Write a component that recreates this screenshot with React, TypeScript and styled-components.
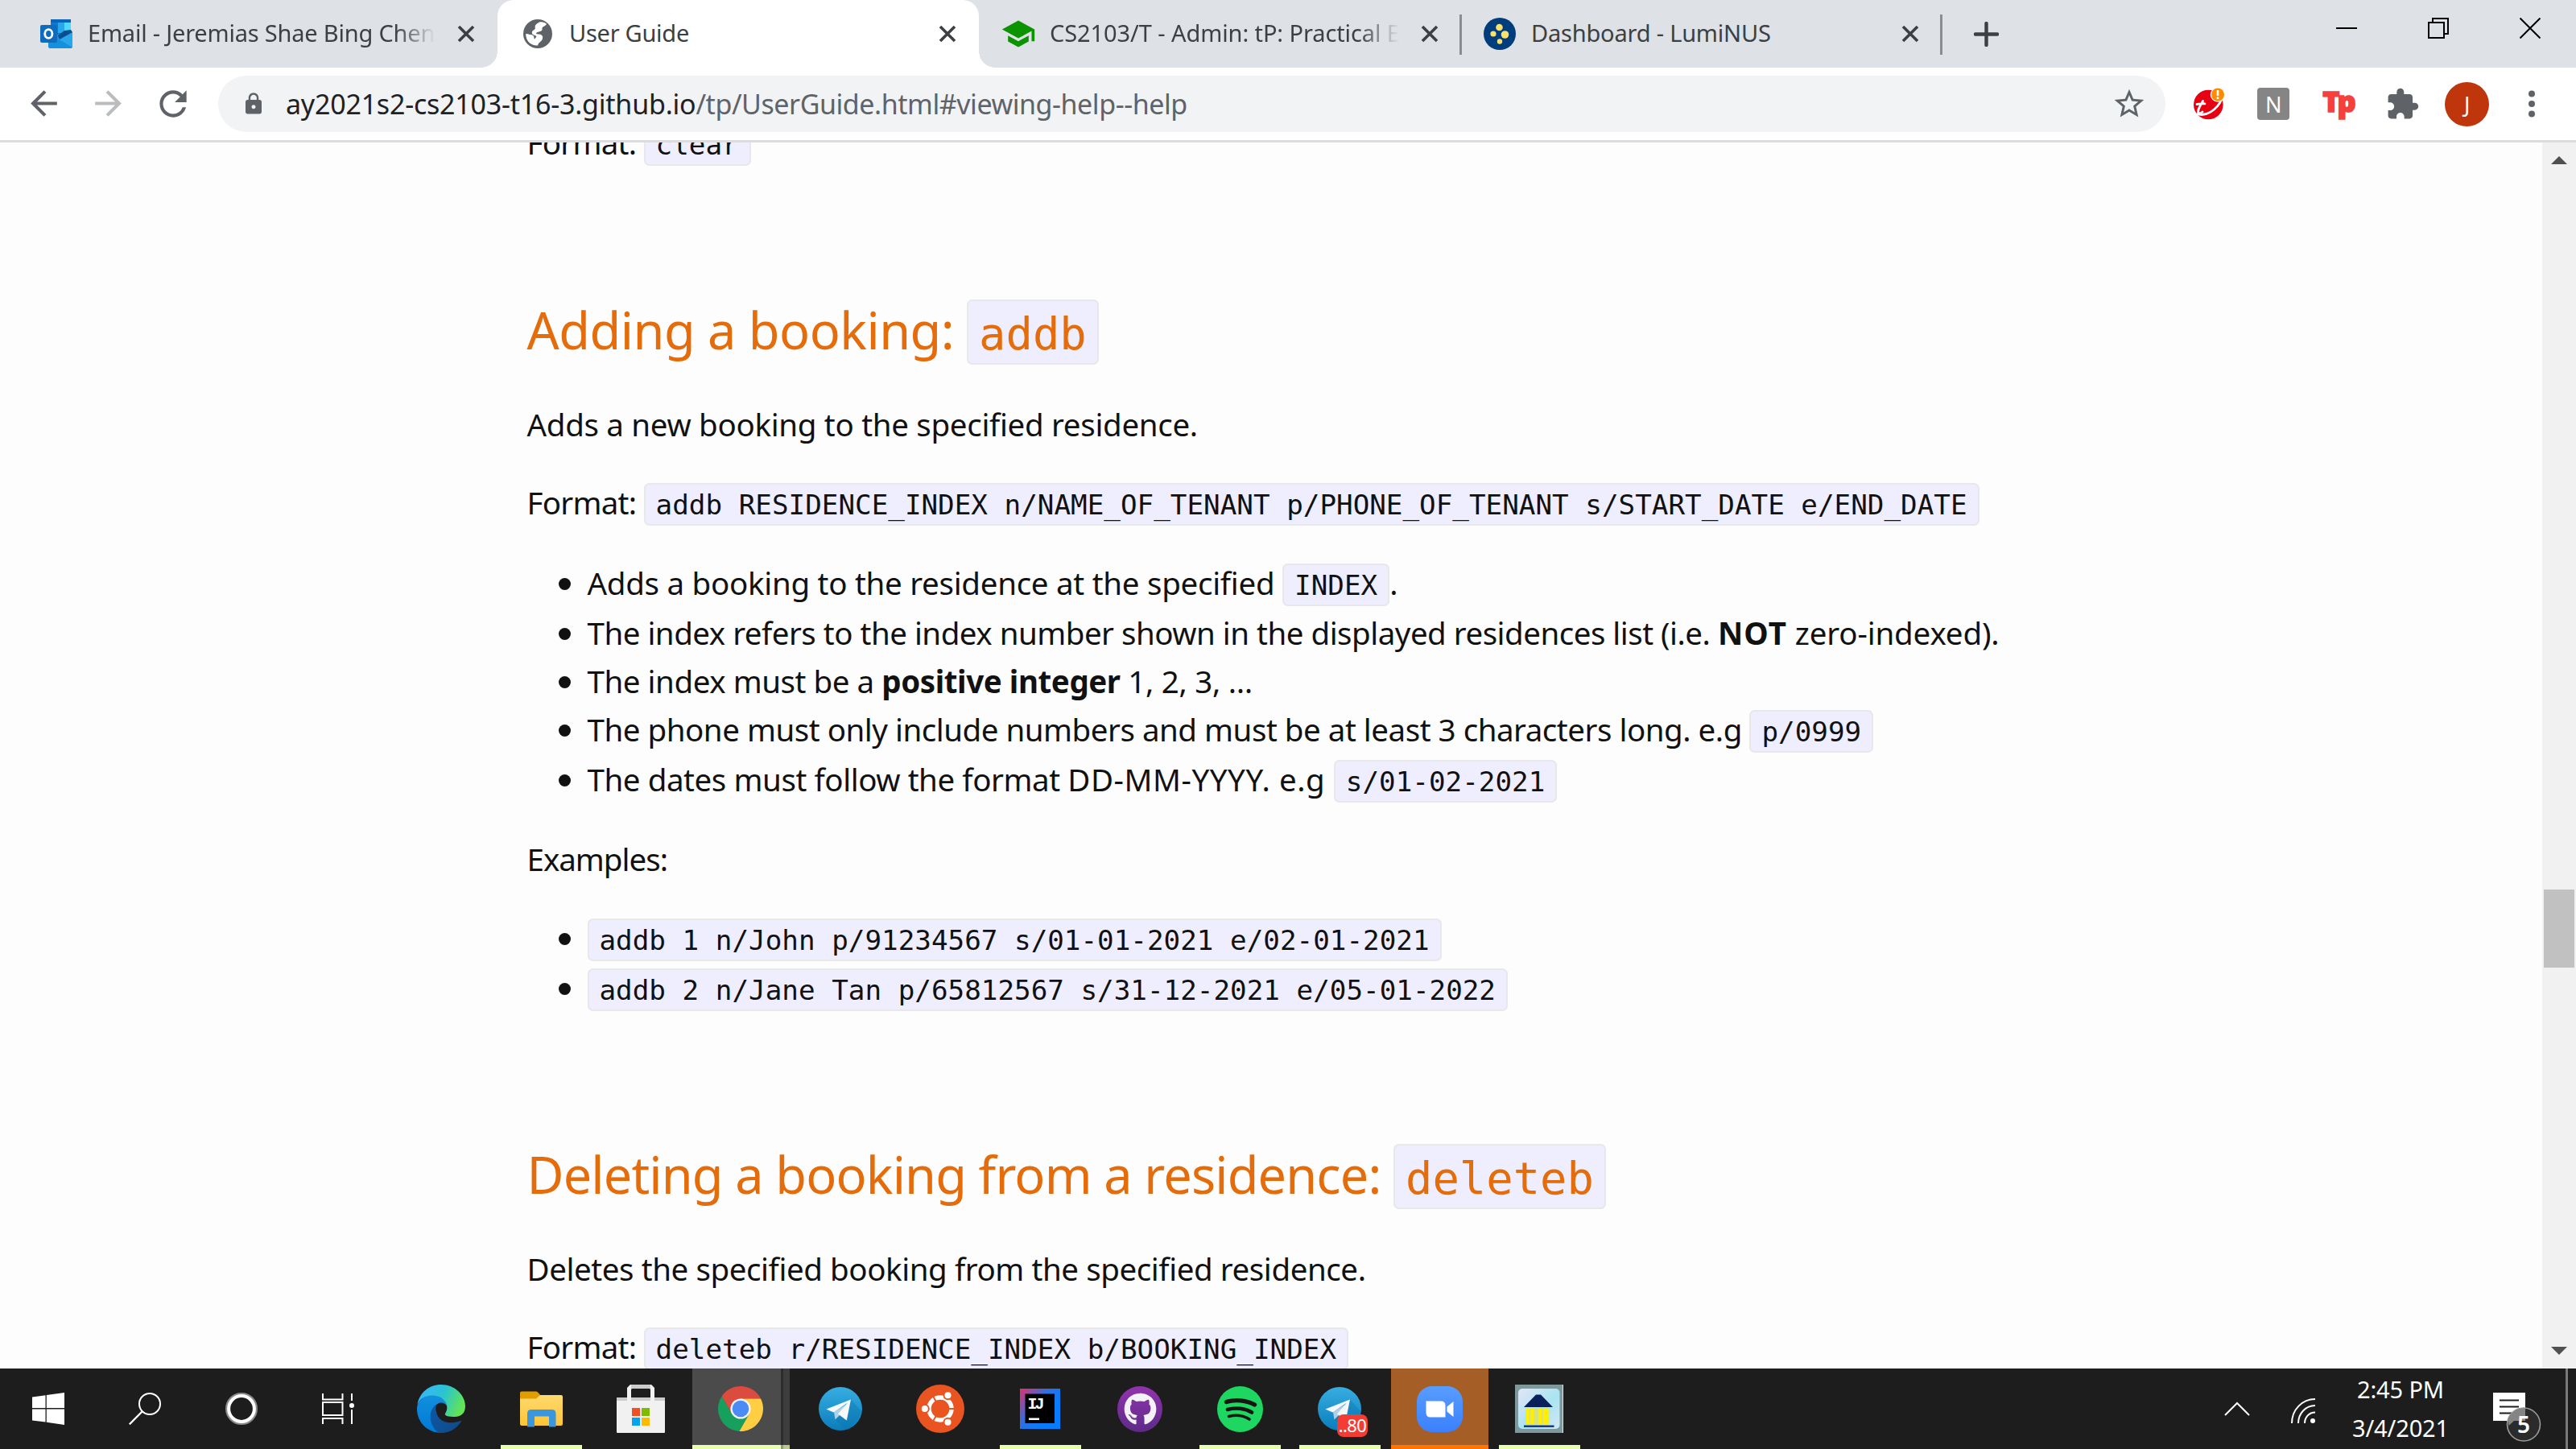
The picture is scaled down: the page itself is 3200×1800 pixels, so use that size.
import React from "react";
import styled, { createGlobalStyle, css } from "styled-components";
import { MdArrowBack, MdArrowForward, MdExtension, MdLock, MdRefresh, MdSchool, MdStarBorder } from "react-icons/md";
import { FaGithub } from "react-icons/fa";

const GlobalStyle = createGlobalStyle`
  * { box-sizing: border-box; }
  body { margin: 0; overflow: hidden; }
  svg { display: block; flex: none; }
`;

const Screen = styled.div`
  display: flex;
  flex-direction: column;
  width: 3200px;
  height: 1800px;
  overflow: hidden;
  background: #fff;
  font-family: "Noto Sans", "Open Sans", sans-serif;
`;

/* ---------- tab strip ---------- */

const TabStrip = styled.div`
  display: flex;
  flex: none;
  height: 84px;
  background: #dee1e6;
`;

const Tab = styled.div<{ w: number; inset: number; active?: boolean; divided?: boolean }>`
  position: relative;
  display: flex;
  align-items: center;
  flex: none;
  width: ${p => p.w}px;
  padding: 0 28px 0 ${p => p.inset}px;
  ${p =>
    p.active &&
    css`
      background: #fff;
      border-radius: 20px 20px 0 0;
      &::before,
      &::after {
        content: "";
        position: absolute;
        bottom: 0;
        width: 20px;
        height: 20px;
      }
      &::before {
        left: -20px;
        background: radial-gradient(circle at 0 0, transparent 19.5px, #fff 20px);
      }
      &::after {
        right: -20px;
        background: radial-gradient(circle at 100% 0, transparent 19.5px, #fff 20px);
      }
    `}
  ${p =>
    p.divided &&
    css`
      &::after {
        content: "";
        position: absolute;
        right: -1px;
        top: 18px;
        width: 3px;
        height: 50px;
        background: #898c91;
      }
    `}
`;

const Favicon = styled.div`
  display: flex;
  align-items: center;
  justify-content: center;
  flex: none;
  width: 40px;
  height: 40px;
`;

const TabTitle = styled.div<{ track?: number; fade?: boolean }>`
  flex: 1;
  min-width: 0;
  margin: 0 27px 0 19px;
  padding-bottom: 3px;
  overflow: hidden;
  white-space: pre;
  font-size: 29px;
  line-height: 40px;
  color: #3c4043;
  letter-spacing: ${p => p.track ?? 0}px;
  ${p => p.fade && css`mask-image: linear-gradient(90deg, #000 calc(100% - 50px), transparent);`}
`;

const NewTab = styled.div`
  display: flex;
  align-items: center;
  padding-left: 40px;
`;

const WindowButtons = styled.div`
  display: flex;
  gap: 88px;
  margin-left: auto;
  padding: 22px 44px 0 0;
`;

const CloseX = () => (
  <svg width="22" height="22" viewBox="0 0 22 22">
    <path d="M2 2L20 20M20 2L2 20" stroke="#3c4043" strokeWidth="3.6" />
  </svg>
);

/* ---------- toolbar ---------- */

const Toolbar = styled.div`
  display: flex;
  align-items: center;
  flex: none;
  height: 93px;
  padding: 0 15px 0 30px;
  border-bottom: 3px solid #dadce0;
  background: #fff;
  color: #5f6368;
`;

const NavButtons = styled.div`
  display: flex;
  gap: 31px;
  width: 241px;
`;

const Omnibox = styled.div`
  display: flex;
  align-items: center;
  width: 2419px;
  height: 70px;
  padding: 0 23px 0 29px;
  border-radius: 35px;
  background: #f1f3f4;
`;

const Url = styled.div`
  flex: 1;
  padding-left: 25px;
  white-space: nowrap;
  font-size: 34px;
  line-height: 70px;
  letter-spacing: -0.45px;
`;

const Host = styled.span`
  color: #202124;
  letter-spacing: -0.22px;
`;

const Extensions = styled.div`
  display: grid;
  grid-template-columns: repeat(6, 80.2px);
  align-items: center;
  justify-items: center;
  padding-left: 14px;
`;

const Avatar = styled.div`
  display: flex;
  align-items: center;
  justify-content: center;
  width: 55px;
  height: 55px;
  border-radius: 50%;
  background: #bf360c;
  color: #fff;
  font-size: 27px;
`;

const NoteBadge = styled.div`
  display: flex;
  align-items: center;
  justify-content: center;
  width: 40px;
  height: 40px;
  border-radius: 4px;
  background: #858585;
  color: #fff;
  font-size: 27px;
`;

const TpLogo = styled.div`
  padding-bottom: 7px;
  color: #f6403c;
  font-family: "Open Sans", sans-serif;
  font-size: 36px;
  font-weight: 800;
  line-height: 50px;
  letter-spacing: -3px;
  -webkit-text-stroke: 1.6px #f6403c;
`;

/* ---------- document ---------- */

const Viewport = styled.div`
  display: flex;
  flex: 1;
  min-height: 0;
  overflow: hidden;
  background: #fdfdfd;
`;

const Article = styled.div`
  flex: 1;
  min-width: 0;
  margin-top: -30px;
  padding-left: 654.5px;
  color: #111;
  font-size: 38.5px;
  line-height: 60px;
  white-space: pre;
`;

const Code = styled.code`
  padding: 5px 13px 4px;
  border: 2px solid #e8e8e8;
  border-radius: 7px;
  background: #eef;
  font-family: "DejaVu Sans Mono", monospace;
  font-size: 34.25px;
  line-height: 0;
  letter-spacing: 0;
`;

const Heading = styled.h3`
  height: 90px;
  margin: 0 0 42px;
  color: #e46c0a;
  font-size: 63px;
  font-weight: 400;
  line-height: 90px;

  ${Code} {
    padding: 8px 13px 4px;
    font-size: 55.5px;
  }
`;

const Para = styled.p<{ after?: number }>`
  height: 60px;
  margin: 0 0 ${p => p.after ?? 37}px;
`;

const Run = styled.span<{ track: number; bold?: boolean }>`
  letter-spacing: ${p => p.track}px;
  font-weight: ${p => (p.bold ? 700 : 400)};
`;

const List = styled.ul<{ after: number }>`
  margin: 0 0 ${p => p.after}px;
  padding: 0 0 0 39px;
  list-style: none;
`;

const Item = styled.li<{ tall?: boolean }>`
  display: grid;
  grid-template-columns: 15px 1fr;
  column-gap: 21px;
  height: ${p => (p.tall ? 62 : 60)}px;

  &::before {
    content: "";
    width: 15px;
    height: 15px;
    margin-top: 24px;
    border-radius: 50%;
    background: #111;
  }
`;

const Scrollbar = styled.div`
  display: flex;
  flex-direction: column;
  align-items: center;
  flex: none;
  width: 42px;
  background: #f1f1f1;
`;

const ArrowCell = styled.div`
  display: flex;
  align-items: center;
  justify-content: center;
  height: 44px;
`;

const Thumb = styled.div`
  width: 38px;
  height: 97px;
  margin: 884px 0 auto;
  background: #c1c1c1;
`;

/* ---------- taskbar ---------- */

const Taskbar = styled.div`
  display: flex;
  flex: none;
  height: 100px;
  background: #1d1d1d;
`;

const SystemSlot = styled.div`
  display: flex;
  align-items: center;
  justify-content: center;
  width: 120px;
`;

const Apps = styled.div`
  display: flex;
  margin-left: 6px;
`;

const AppSlot = styled.div<{ running?: boolean; tone?: "focus" | "alert" }>`
  position: relative;
  display: flex;
  align-items: center;
  justify-content: center;
  width: 124px;
  ${p =>
    p.running &&
    css`
      background: linear-gradient(#e6ffae, #e6ffae) 12px 95px / 101px 5px no-repeat;
    `}
  ${p =>
    p.tone === "focus" &&
    css`
      padding-right: 1px;
      background: linear-gradient(#e6ffae, #e6ffae) 2px 95px / 110px 5px no-repeat,
        linear-gradient(#8f9e72, #8f9e72) 112px 95px / 3px 5px no-repeat,
        linear-gradient(#b8c98e, #b8c98e) 115px 95px / 8px 5px no-repeat,
        linear-gradient(90deg, transparent 2px, #4b4b4b 2px 112px, #2d2d2d 112px 115px, #3d3d3d 115px 123px, transparent 123px);
    `}
  ${p =>
    p.tone === "alert" &&
    css`
      background: linear-gradient(#ff7500, #ff7500) 2px 95px / 121px 5px no-repeat,
        linear-gradient(90deg, transparent 2px, #a55e26 2px 123px, transparent 123px);
    `}
`;

const UnreadBadge = styled.div`
  position: absolute;
  left: 59px;
  top: 57px;
  width: 38px;
  height: 28px;
  border-radius: 8px;
  background: #f23c34;
  color: #fff;
  font-size: 22px;
  line-height: 27px;
  letter-spacing: -0.6px;
  text-align: center;
`;

const Tray = styled.div`
  display: flex;
  align-items: center;
  margin-left: auto;
  padding-right: 10px;
`;

const TrayIcon = styled.div<{ after: number; drop?: number }>`
  margin-right: ${p => p.after}px;
  padding-top: ${p => p.drop ?? 0}px;
`;

const Clock = styled.div`
  width: 124px;
  margin-right: 53px;
  padding-bottom: 1px;
  color: #fff;
  font-size: 29px;
  line-height: 47.5px;
  letter-spacing: -0.15px;
  text-align: center;
`;

const ShowDesktop = styled.div`
  width: 3px;
  height: 100px;
  background: #7a7a7a;
`;

/* ---------- drawings ---------- */

const OutlookIcon = () => (
  <svg width="40" height="36" viewBox="0 0 40 36">
    <rect x="13" width="25" height="30" fill="#0a64b8" />
    <rect x="13" y="4" width="9" height="13" fill="#0f78d4" />
    <rect x="22" y="4" width="8" height="13" fill="#28a8ea" />
    <rect x="30" y="4" width="8" height="10" fill="#50d9ff" />
    <rect x="22" y="17" width="8" height="7" fill="#0f78d4" />
    <path d="M10 20L40 16V34a2 2 0 0 1-2 2H12a2 2 0 0 1-2-2Z" fill="#1490df" />
    <path d="M22 24L40 16V35Z" fill="#28a8ea" />
    <path d="M40 16L24 25L22 20L30 14L38 13Z" fill="#0a4e92" />
    <rect y="7" width="21" height="22" rx="2" fill="#0f6cbd" />
    <ellipse cx="10.300" cy="18" rx="4.600" ry="5.400" fill="none" stroke="#fff" strokeWidth="2.800" />
  </svg>
);

const GlobeIcon = () => (
  <svg width="36" height="36" viewBox="0 0 36 36">
    <circle cx="18" cy="18" r="18" fill="#5f6368" />
    <path d="M20 3.500C24 3 27 4 29 6C27 9 23 9 23.500 12C24 15 20 15 17.500 16C15 17 16 18.500 19 18.500C22 18.500 25 20 24 24C23 28 19 28 18 32.500C9 33 3 26 3.500 18L11 19.500C14 20.500 13 23 14 25C15 23 17 22 16 20.500C13 20 9.500 18 11 15C12.500 13 15 13 14.500 10.500C14 7 17 4.500 20 3.500Z" fill="#fff" />
    <path d="M3.500 18C4 10 11 3.500 20 3.500C15 6 14 8 14.500 10.500C15 13 12 13 11 15C10 17 11 18.500 12 19.500Z" fill="#5f6368" />
    <path d="M3.500 18L11 19.500C14 21 12 24 14.500 26L14 32C7 30 3 25 3.500 18Z" fill="#fff" />
  </svg>
);

const LuminusIcon = () => (
  <svg width="40" height="40" viewBox="0 0 40 40">
    <circle cx="20" cy="20" r="20" fill="#003d7c" />
    <circle cx="19.500" cy="12" r="4.300" fill="#fbe06a" />
    <circle cx="12" cy="20" r="3.600" fill="#fbe06a" />
    <circle cx="26.500" cy="21" r="4.800" fill="#fbe06a" />
    <circle cx="20" cy="29.500" r="3.200" fill="#fbe06a" />
  </svg>
);

const TrendIcon = () => (
  <svg width="38" height="40" viewBox="0 0 38 40">
    <circle cx="18.300" cy="21" r="18.300" fill="#e60012" />
    <path d="M4 20.500C8 20 10 19.500 14 19.800M11.500 16.500C8 23 3.500 29 6.500 31.500C8.500 32.500 10 31 11 30" fill="none" stroke="#fff" strokeWidth="2.800" strokeLinecap="round" />
    <path d="M3.500 32C14 37 29 28 35 14" fill="none" stroke="#fff" strokeWidth="2.800" />
    <circle cx="30" cy="8.500" r="9.200" fill="#fff" />
    <circle cx="30" cy="8.500" r="8" fill="#ff8c00" />
    <rect x="28.700" y="3" width="2.600" height="7" fill="#fff" />
    <rect x="28.700" y="11.500" width="2.600" height="2.600" fill="#fff" />
  </svg>
);

const WindowsIcon = () => (
  <svg width="40" height="40" viewBox="0 0 40 40" fill="#fff">
    <path d="M0 5.500L16.500 3.200V19H0ZM17.800 3L40 0V19H17.800ZM0 20.500H16.500V36.500L0 34.500ZM17.800 20.500H40V40L17.800 36.800Z" />
  </svg>
);

const SearchIcon = () => (
  <svg width="40" height="40" viewBox="0 0 40 40" fill="none" stroke="#fff" strokeWidth="2">
    <circle cx="26" cy="14" r="13" />
    <path d="M16.500 23.500L.8 39.300" strokeWidth="2.400" />
  </svg>
);

const CortanaIcon = () => (
  <svg width="40" height="40" viewBox="0 0 40 40" fill="none">
    <circle cx="20" cy="20" r="18.600" stroke="#8b8b8b" strokeWidth="2.800" />
    <circle cx="20" cy="20" r="15.900" stroke="#fff" strokeWidth="4" />
  </svg>
);

const TaskViewIcon = () => (
  <svg width="40" height="40" viewBox="0 0 40 40" fill="none" stroke="#fff" strokeWidth="2">
    <path d="M1 1V8.500H25.500V1M1 39V32H25.500V39M1 12H25.500V28H1ZM37 1V10M37 21V39" />
    <circle cx="37" cy="16" r="3" fill="#fff" stroke="none" />
  </svg>
);

const EdgeIcon = () => (
  <svg width="60" height="60" viewBox="0 0 60 60">
    <defs>
      <linearGradient id="edgeTop" x1="0" y1=".3" x2="1" y2=".6">
        <stop offset=".05" stopColor="#35b8f8" />
        <stop offset=".5" stopColor="#2bc3d2" />
        <stop offset=".95" stopColor="#61e457" />
      </linearGradient>
      <linearGradient id="edgeBody" x1="0" y1="0" x2="0" y2="1">
        <stop offset="0" stopColor="#1390dc" />
        <stop offset="1" stopColor="#0078d7" />
      </linearGradient>
      <linearGradient id="edgeDeep" x1="0" y1="0" x2="1" y2=".6">
        <stop offset="0" stopColor="#0c59a4" />
        <stop offset="1" stopColor="#114a8b" />
      </linearGradient>
    </defs>
    <path d="M0 28C2 18 12 12 20 13C31 14 37 20 37.500 27C35 22.500 29 21 25 24.500C14 32 15 52 33 60C12 61-1 45 0 28Z" fill="url(#edgeBody)" />
    <path d="M25 24C14 30 13 50 27 60C40 61 51 54 55.500 44.500C42 50 27 48 24 34C23 29 23 27 25 24Z" fill="url(#edgeDeep)" />
    <path d="M.5 25C3 10 15 0 30 0C47 0 60 13 60 27C60 35 55 40 47 40C40 40 33.500 39 35 36C40 30 38 15 20 13.500C11 13 4 17 .5 25Z" fill="url(#edgeTop)" />
  </svg>
);

const ExplorerIcon = () => (
  <svg width="53" height="45" viewBox="0 0 53 45">
    <defs>
      <linearGradient id="folder" x1="0" y1="0" x2="0" y2="1">
        <stop offset="0" stopColor="#ffd96f" />
        <stop offset="1" stopColor="#fcc535" />
      </linearGradient>
    </defs>
    <path d="M0 2Q0 .5 2 .5H20Q22 .5 25 5V10H0Z" fill="#e19d00" />
    <path d="M0 9.500H20L25 5H51Q53 5 53 7V41Q53 43 51 43H2Q0 43 0 41Z" fill="url(#folder)" />
    <path d="M9 44.500V28Q9 23 14 23H39.500Q44.500 23 44.500 28V44.500H36V31.500H18V44.500Z" fill="#3a96dd" />
  </svg>
);

const StoreIcon = () => (
  <svg width="60" height="60" viewBox="0 0 60 60">
    <rect y="16" width="60" height="44" rx="1" fill="#f1f1f1" />
    <rect y="16" width="60" height="4" fill="#ccc" />
    <path d="M15.500 20V5L18.500 2H41.500L44.500 5V20" fill="none" stroke="#f1f1f1" strokeWidth="5" />
    <rect x="18" y="0" width="24" height="5" fill="#ccc" />
    <path d="M19 29h10v10H19Z" fill="#f25022" />
    <path d="M31 29h10v10H31Z" fill="#7fba00" />
    <path d="M19 41h10v10H19Z" fill="#00a4ef" />
    <path d="M31 41h10v10H31Z" fill="#ffb900" />
  </svg>
);

const ChromeIcon = () => (
  <svg width="56" height="56" viewBox="0 0 56 56">
    <path d="M53 15.400A28 28 0 0 0 4.600 12.650L17.100 34.300L28 28V15.400Z" fill="#db4c3f" />
    <path d="M4.600 12.650A28 28 0 0 0 26.400 55.950L38.900 34.300L28 28L17.100 34.300Z" fill="#17a05d" />
    <path d="M26.400 55.950A28 28 0 0 0 53 15.400H28V28L38.900 34.300Z" fill="#ffce43" />
    <circle cx="28" cy="28" r="12.600" fill="#f2f2f2" />
    <circle cx="28" cy="28" r="10.300" fill="#4c8bf5" />
  </svg>
);

const TelegramIcon = () => (
  <svg width="54" height="54" viewBox="0 0 54 54">
    <defs>
      <linearGradient id="tele" x1="0" y1="0" x2="0" y2="1">
        <stop offset="0" stopColor="#37aee2" />
        <stop offset="1" stopColor="#0a7dbb" />
      </linearGradient>
    </defs>
    <circle cx="27" cy="27" r="27" fill="url(#tele)" />
    <path d="M40 15.500L53 30C51 41 42 50 33 53L20 40Z" fill="#0b6fa8" opacity=".35" />
    <path d="M19 31L20.500 40.500L26 35L37 20Z" fill="#b4cfe4" />
    <path d="M40 15.500L9.400 27.500L18.500 31.500L36 19.500L24 33.500L34.800 41.500Z" fill="#f5f9fc" />
  </svg>
);

const UbuntuIcon = () => (
  <svg width="60" height="60" viewBox="0 0 60 60">
    <circle cx="30" cy="30" r="30" fill="#e95420" />
    <circle cx="30" cy="30" r="14" fill="none" stroke="#fff" strokeWidth="5.500" />
    <path d="M30 30H50M30 30L20 12.700M30 30L20 47.300" stroke="#e95420" strokeWidth="2" />
    <circle cx="30" cy="30" r="11" fill="#e95420" />
    <g fill="#fff" stroke="#e95420" strokeWidth="2">
      <circle cx="39.500" cy="13.200" r="5" />
      <circle cx="39.500" cy="46.800" r="5" />
      <circle cx="10.800" cy="30" r="5" />
    </g>
  </svg>
);

const IntellijIcon = () => (
  <svg width="50" height="50" viewBox="0 0 50 50">
    <defs>
      <linearGradient id="ij" x1="0" y1="0" x2=".75" y2=".6">
        <stop offset="0" stopColor="#e3306c" />
        <stop offset=".6" stopColor="#2f6fe0" />
        <stop offset="1" stopColor="#087cfa" />
      </linearGradient>
    </defs>
    <rect width="50" height="50" fill="url(#ij)" />
    <rect x="6.500" y="6.500" width="36.500" height="36.500" fill="#000" />
    <text x="9.500" y="25" fontSize="20" fontWeight="700" fill="#fff" fontFamily="Liberation Mono" textLength="21">IJ</text>
    <rect x="11" y="36.500" width="13" height="2.500" fill="#fff" />
  </svg>
);

const GithubDisc = styled.div`
  display: flex;
  align-items: center;
  justify-content: center;
  width: 56px;
  height: 57px;
  border-radius: 50%;
  background: linear-gradient(#9333ae, #5d2b88);
  color: #f3f3f5;
`;

const SpotifyIcon = () => (
  <svg width="57" height="57" viewBox="0 0 57 57" fill="none" stroke="#191414" strokeLinecap="round">
    <circle cx="28.500" cy="28.500" r="28.500" fill="#1ed760" stroke="none" />
    <path d="M11.500 19.500C22 16 37 17.500 46.500 23" strokeWidth="5.400" />
    <path d="M13 29C23 26 35 27.500 43 32.500" strokeWidth="4.600" />
    <path d="M14.500 37.500C22 35.500 32 36 40 41" strokeWidth="3.600" />
  </svg>
);

const ZoomIcon = () => (
  <svg width="57" height="57" viewBox="0 0 57 57">
    <defs>
      <linearGradient id="zm" x1="0" y1="0" x2="0" y2="1">
        <stop offset="0" stopColor="#579dff" />
        <stop offset="1" stopColor="#3b80fb" />
      </linearGradient>
    </defs>
    <rect width="57" height="57" rx="19" fill="url(#zm)" />
    <path d="M11.500 18.500H30Q35.500 18.500 35.500 24V38.500H17Q11.500 38.500 11.500 33ZM37.500 25.500L45.500 19V38L37.500 31.500Z" fill="#fff" />
  </svg>
);

const HouseIcon = () => (
  <svg width="60" height="60" viewBox="0 0 60 60">
    <defs>
      <linearGradient id="house" x1="0" y1="0" x2="1" y2="1">
        <stop offset="0" stopColor="#e4e4f8" />
        <stop offset=".55" stopColor="#a9e4f2" />
        <stop offset="1" stopColor="#d3e6f6" />
      </linearGradient>
    </defs>
    <rect width="60" height="60" fill="#7f989c" />
    <path d="M59.500 0V60" stroke="#e6e6e6" />
    <rect x="4" y="5" width="51.500" height="50" rx="5" fill="url(#house)" />
    <path d="M26 12.500H32L47 28H11Z" fill="#0a1f5c" />
    <rect x="13" y="30" width="29.500" height="19" fill="#d9e27a" />
    <path d="M15.500 30V49M21.500 30V49M31 30V49" stroke="#ffef00" strokeWidth="4" />
    <path d="M38.500 30V49" stroke="#ffef00" strokeWidth="7" />
    <path d="M11 51.800H48.500" stroke="#1b3a78" strokeWidth="2.600" />
  </svg>
);

const WifiIcon = () => (
  <svg width="31" height="31" viewBox="0 0 31 31" fill="none" stroke="#fff" strokeWidth="2">
    <path d="M1 31C1 14 14 1 30 1M9 31C9 19 18 9 30 9M17 31C17 24 22 17.500 30 17.500" />
    <circle cx="27" cy="28" r="3" fill="#fff" stroke="none" />
  </svg>
);

const ActionCenterIcon = () => (
  <svg width="60" height="62" viewBox="0 0 60 62">
    <path d="M0 0H40V35H23L17 41V35H0Z" fill="#fff" />
    <path d="M8 9.500H32M8 17.500H32M8 25.500H32" stroke="#1d1d1d" strokeWidth="2" />
    <circle cx="38" cy="39.500" r="20.500" fill="#2b2b2b" stroke="#9c9c9c" strokeWidth="1.600" />
    <path d="M18.500 35A20 20 0 0 1 40 19.500V35H26L19.500 41Z" fill="#858585" />
    <text x="38" y="49.500" fontSize="28" fontWeight="600" fill="#fff" textAnchor="middle" fontFamily="Noto Sans">5</text>
  </svg>
);

export default function App() {
  return (
    <Screen>
      <GlobalStyle />
      <TabStrip>
        <Tab w={618} inset={50}>
          <Favicon><OutlookIcon /></Favicon>
          <TabTitle track={-0.2} fade>Email - Jeremias Shae Bing Chen</TabTitle>
          <CloseX />
        </Tab>
        <Tab w={598} inset={30} active>
          <Favicon><GlobeIcon /></Favicon>
          <TabTitle track={-0.27}>User Guide</TabTitle>
          <CloseX />
        </Tab>
        <Tab w={599} inset={29} divided>
          <Favicon><MdSchool size={44} color="#0b9400" /></Favicon>
          <TabTitle track={-0.09} fade>CS2103/T - Admin: tP: Practical Ex</TabTitle>
          <CloseX />
        </Tab>
        <Tab w={597} inset={28} divided>
          <Favicon><LuminusIcon /></Favicon>
          <TabTitle track={-0.2}>Dashboard - LumiNUS</TabTitle>
          <CloseX />
        </Tab>
        <NewTab>
          <svg width="31" height="31" viewBox="0 0 31 31">
            <path d="M15.500 2V29M2 15.500H29" stroke="#3c4043" strokeWidth="4.400" strokeLinecap="round" />
          </svg>
        </NewTab>
        <WindowButtons>
          <svg width="26" height="26" viewBox="0 0 26 26"><path d="M0 13H26" stroke="#000" strokeWidth="2" /></svg>
          <svg width="26" height="26" viewBox="0 0 26 26" fill="none" stroke="#000" strokeWidth="2">
            <path d="M1 6H20V25H1ZM6 6V1H25V20H20" />
          </svg>
          <svg width="26" height="26" viewBox="0 0 26 26"><path d="M.5 .5L25.500 25.500M25.500 .5L.5 25.500" stroke="#000" strokeWidth="2" /></svg>
        </WindowButtons>
      </TabStrip>

      <Toolbar>
        <NavButtons>
          <MdArrowBack size={49} />
          <MdArrowForward size={49} color="#babcbe" />
          <MdRefresh size={50} />
        </NavButtons>
        <Omnibox>
          <MdLock size={30} />
          <Url><Host>ay2021s2-cs2103-t16-3.github.io</Host>/tp/UserGuide.html#viewing-help--help</Url>
          <MdStarBorder size={44} />
        </Omnibox>
        <Extensions>
          <TrendIcon />
          <NoteBadge>N</NoteBadge>
          <TpLogo>Tp</TpLogo>
          <MdExtension size={43} />
          <Avatar>J</Avatar>
          <svg width="20" height="34" viewBox="0 0 20 34" fill="#5f6368">
            <circle cx="10" cy="4.500" r="4" />
            <circle cx="10" cy="17" r="4" />
            <circle cx="10" cy="29.500" r="4" />
          </svg>
        </Extensions>
      </Toolbar>

      <Viewport>
        <Article>
          <Para after={158}><Run track={-0.74}>Format: </Run><Code>clear</Code></Para>

          <Heading><Run track={-0.5}>Adding a booking: </Run><Code>addb</Code></Heading>
          <Para><Run track={-0.31}>Adds a new booking to the specified residence.</Run></Para>
          <Para after={40}>
            <Run track={-0.74}>Format: </Run>
            <Code>addb RESIDENCE_INDEX n/NAME_OF_TENANT p/PHONE_OF_TENANT s/START_DATE e/END_DATE</Code>
          </Para>
          <List after={39}>
            <Item tall><div><Run track={-0.28}>Adds a booking to the residence at the specified </Run><Code>INDEX</Code>.</div></Item>
            <Item>
              <div>
                <Run track={-0.5}>The index refers to the index number shown in the displayed residences list (i.e. </Run>
                <Run track={1.06} bold>NOT</Run>
                <Run track={-0.15}> zero-indexed).</Run>
              </div>
            </Item>
            <Item>
              <div>
                <Run track={-0.45}>The index must be a </Run>
                <Run track={-0.43} bold>positive integer</Run>
                <Run track={-0.3}> 1, 2, 3, …</Run>
              </div>
            </Item>
            <Item tall><div><Run track={-0.479}>The phone must only include numbers and must be at least 3 characters long. e.g </Run><Code>p/0999</Code></div></Item>
            <Item>
              <div>
                <Run track={-0.43}>The dates must follow the format </Run>
                <Run track={0.55}>DD-MM-YYYY. e.g </Run>
                <Code>s/01-02-2021</Code>
              </div>
            </Item>
          </List>
          <Para after={38}><Run track={-1}>Examples:</Run></Para>
          <List after={157}>
            <Item tall><div><Code>addb 1 n/John p/91234567 s/01-01-2021 e/02-01-2021</Code></div></Item>
            <Item><div><Code>addb 2 n/Jane Tan p/65812567 s/31-12-2021 e/05-01-2022</Code></div></Item>
          </List>

          <Heading><Run track={-0.838}>Deleting a booking from a residence: </Run><Code>deleteb</Code></Heading>
          <Para><Run track={-0.42}>Deletes the specified booking from the specified residence.</Run></Para>
          <Para><Run track={-0.74}>Format: </Run><Code>deleteb r/RESIDENCE_INDEX b/BOOKING_INDEX</Code></Para>
        </Article>
        <Scrollbar>
          <ArrowCell><svg width="20" height="10" viewBox="0 0 20 10"><path d="M10 0L20 10H0Z" fill="#505050" /></svg></ArrowCell>
          <Thumb />
          <ArrowCell><svg width="20" height="10" viewBox="0 0 20 10"><path d="M0 0H20L10 10Z" fill="#505050" /></svg></ArrowCell>
        </Scrollbar>
      </Viewport>

      <Taskbar>
        <SystemSlot><WindowsIcon /></SystemSlot>
        <SystemSlot><SearchIcon /></SystemSlot>
        <SystemSlot><CortanaIcon /></SystemSlot>
        <SystemSlot><TaskViewIcon /></SystemSlot>
        <Apps>
          <AppSlot><EdgeIcon /></AppSlot>
          <AppSlot running><ExplorerIcon /></AppSlot>
          <AppSlot><StoreIcon /></AppSlot>
          <AppSlot tone="focus"><ChromeIcon /></AppSlot>
          <AppSlot><TelegramIcon /></AppSlot>
          <AppSlot><UbuntuIcon /></AppSlot>
          <AppSlot running><IntellijIcon /></AppSlot>
          <AppSlot><GithubDisc><FaGithub size={41} /></GithubDisc></AppSlot>
          <AppSlot running><SpotifyIcon /></AppSlot>
          <AppSlot running><TelegramIcon /><UnreadBadge>..80</UnreadBadge></AppSlot>
          <AppSlot tone="alert"><ZoomIcon /></AppSlot>
          <AppSlot running><HouseIcon /></AppSlot>
        </Apps>
        <Tray>
          <TrayIcon after={51} drop={0}>
            <svg width="32" height="18" viewBox="0 0 32 18"><path d="M1 17L16 2L31 17" fill="none" stroke="#fff" strokeWidth="2" /></svg>
          </TrayIcon>
          <TrayIcon after={43} drop={4}><WifiIcon /></TrayIcon>
          <Clock>2:45 PM<br />3/4/2021</Clock>
          <TrayIcon after={30} drop={22}><ActionCenterIcon /></TrayIcon>
          <ShowDesktop />
        </Tray>
      </Taskbar>
    </Screen>
  );
}
